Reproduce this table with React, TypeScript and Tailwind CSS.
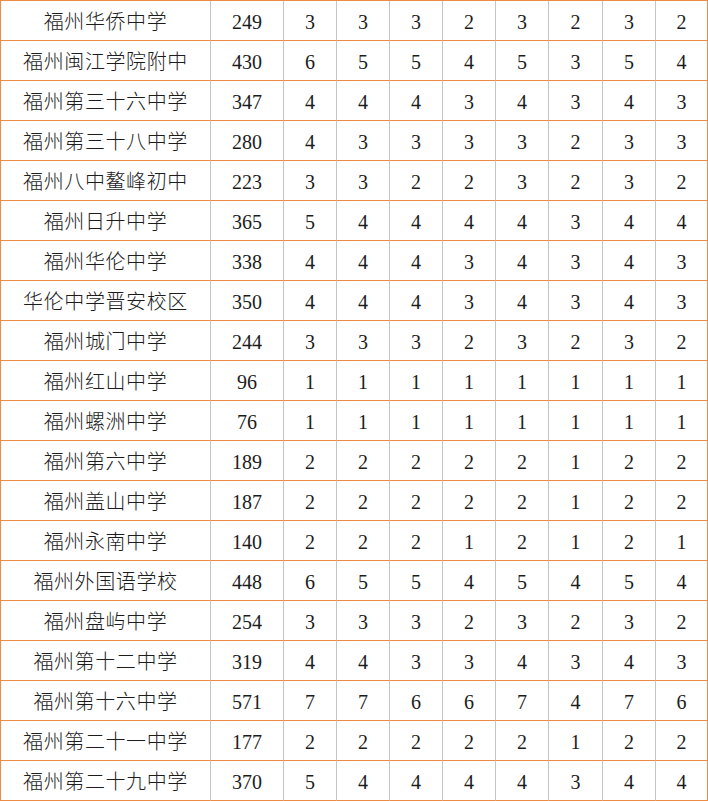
import React from "react";

const rows: [string, number, number[]][] = [
  ["福州华侨中学", 249, [3, 3, 3, 2, 3, 2, 3, 2]],
  ["福州闽江学院附中", 430, [6, 5, 5, 4, 5, 3, 5, 4]],
  ["福州第三十六中学", 347, [4, 4, 4, 3, 4, 3, 4, 3]],
  ["福州第三十八中学", 280, [4, 3, 3, 3, 3, 2, 3, 3]],
  ["福州八中鳌峰初中", 223, [3, 3, 2, 2, 3, 2, 3, 2]],
  ["福州日升中学", 365, [5, 4, 4, 4, 4, 3, 4, 4]],
  ["福州华伦中学", 338, [4, 4, 4, 3, 4, 3, 4, 3]],
  ["华伦中学晋安校区", 350, [4, 4, 4, 3, 4, 3, 4, 3]],
  ["福州城门中学", 244, [3, 3, 3, 2, 3, 2, 3, 2]],
  ["福州红山中学", 96, [1, 1, 1, 1, 1, 1, 1, 1]],
  ["福州螺洲中学", 76, [1, 1, 1, 1, 1, 1, 1, 1]],
  ["福州第六中学", 189, [2, 2, 2, 2, 2, 1, 2, 2]],
  ["福州盖山中学", 187, [2, 2, 2, 2, 2, 1, 2, 2]],
  ["福州永南中学", 140, [2, 2, 2, 1, 2, 1, 2, 1]],
  ["福州外国语学校", 448, [6, 5, 5, 4, 5, 4, 5, 4]],
  ["福州盘屿中学", 254, [3, 3, 3, 2, 3, 2, 3, 2]],
  ["福州第十二中学", 319, [4, 4, 3, 3, 4, 3, 4, 3]],
  ["福州第十六中学", 571, [7, 7, 6, 6, 7, 4, 7, 6]],
  ["福州第二十一中学", 177, [2, 2, 2, 2, 2, 1, 2, 2]],
  ["福州第二十九中学", 370, [5, 4, 4, 4, 4, 3, 4, 4]],
];

const cell =
  "h-[40px] pt-[2px] flex items-center justify-center border-b border-b-[#ed8b45] border-l border-l-[#c4c4c4]";

export default function App() {
  return (
    <div
      className="w-[708px] bg-white text-[#1c1c1c] text-[20px] border-t border-[#ed8b45]"
      style={{ fontFamily: '"Liberation Serif", "Noto Sans CJK SC", serif' }}
    >
      {rows.map(([name, total, vals]) => (
        <div
          key={name}
          className="grid grid-cols-[210px_73px_53px_53px_53px_53px_53px_54px_53px_53px]"
        >
          <div className={`${cell} !border-l-[#ed8b45] font-light tracking-[0.6px]`}>{name}</div>
          <div className={cell}>{total}</div>
          {vals.map((v, i) => (
            <div
              key={i}
              className={`${cell} ${i === vals.length - 1 ? "border-r border-r-[#ed8b45]" : ""}`}
            >
              {v}
            </div>
          ))}
        </div>
      ))}
    </div>
  );
}
